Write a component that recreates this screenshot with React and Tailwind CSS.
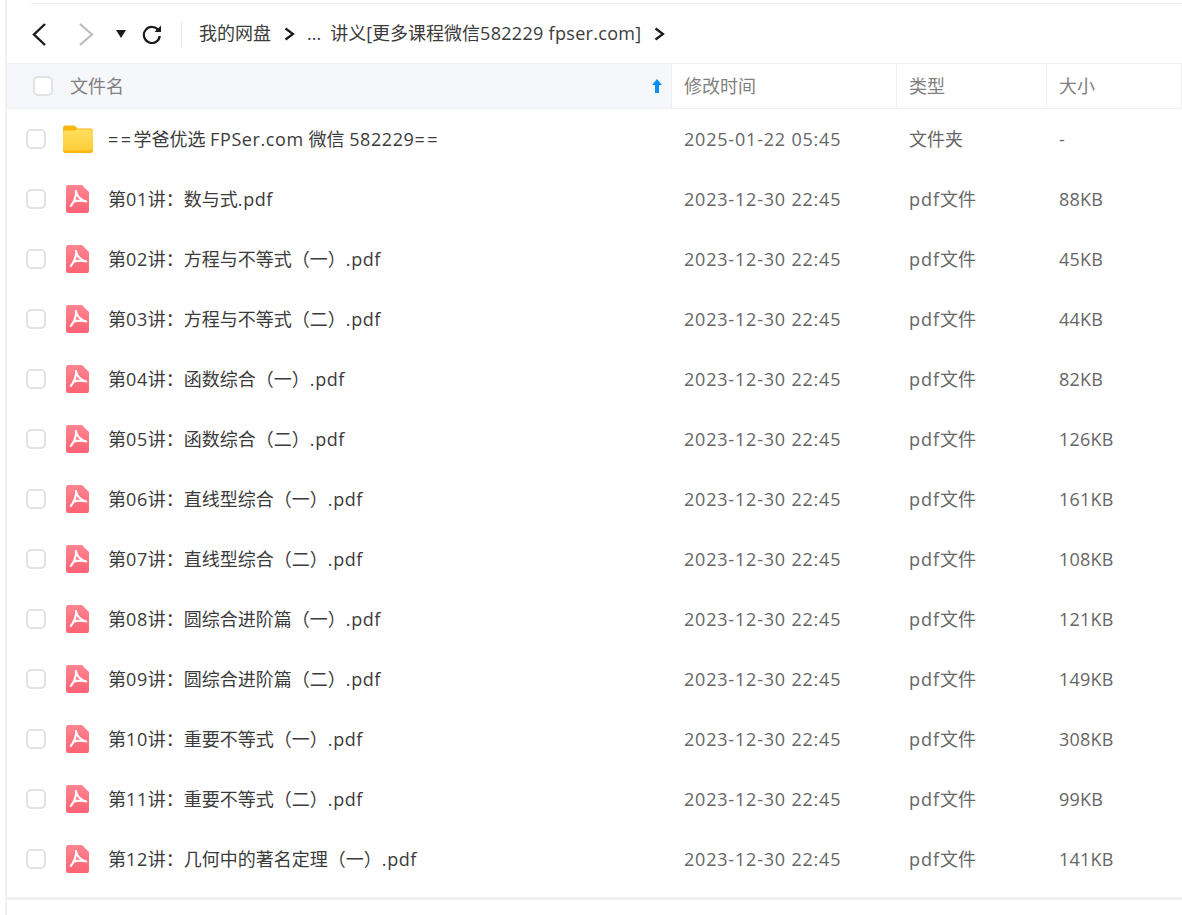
import React from "react";

const files = [
    {name: "第01讲：数与式.pdf", size: "88KB"},
    {name: "第02讲：方程与不等式（一）.pdf", size: "45KB"},
    {name: "第03讲：方程与不等式（二）.pdf", size: "44KB"},
    {name: "第04讲：函数综合（一）.pdf", size: "82KB"},
    {name: "第05讲：函数综合（二）.pdf", size: "126KB"},
    {name: "第06讲：直线型综合（一）.pdf", size: "161KB"},
    {name: "第07讲：直线型综合（二）.pdf", size: "108KB"},
    {name: "第08讲：圆综合进阶篇（一）.pdf", size: "121KB"},
    {name: "第09讲：圆综合进阶篇（二）.pdf", size: "149KB"},
    {name: "第10讲：重要不等式（一）.pdf", size: "308KB"},
    {name: "第11讲：重要不等式（二）.pdf", size: "99KB"},
    {name: "第12讲：几何中的著名定理（一）.pdf", size: "141KB"},
];

function Checkbox() {
    return <div className="w-[20px] h-[20px] rounded-[5px] border-2 border-[#e2e2e2] bg-white shrink-0"/>;
}

function FolderIcon() {
    return (
        <svg width="30" height="28" viewBox="0 0 30 28" className="shrink-0">
            <defs>
                <linearGradient id="folderbg" x1="0" y1="0" x2="0" y2="1">
                    <stop offset="0" stopColor="#ffdf5e"/>
                    <stop offset="1" stopColor="#fdcb34"/>
                </linearGradient>
            </defs>
            <path d="M0 3a2.500 2.500 0 0 1 2.500-2.500h8c1 0 1.600.4 2.300 1.200L14.500 3.500H27a3 3 0 0 1 3 3V12H0z" fill="#fbb612"/>
            <path d="M0 7.500a2 2 0 0 1 2-2h9.500c1 0 1.500-.3 2.200-1h13.300a3 3 0 0 1 3 3V25a3 3 0 0 1-3 3H3a3 3 0 0 1-3-3z" fill="url(#folderbg)"/>
            <path d="M0 25.500h30V25a3 3 0 0 1-3 3H3a3 3 0 0 1-3-3z" fill="#fbb612"/>
        </svg>
    );
}

function PdfIcon() {
    return (
        <svg width="23" height="28" viewBox="0 0 23 28" className="mr-[1px] shrink-0">
            <defs>
                <linearGradient id="pdfbg" x1="0" y1="0" x2="0" y2="1">
                    <stop offset="0" stopColor="#ff8590"/>
                    <stop offset="1" stopColor="#fe6273"/>
                </linearGradient>
            </defs>
            <path d="M2.500 0H16L23 7V25.500a2.500 2.500 0 0 1-2.500 2.500H2.500A2.500 2.500 0 0 1 0 25.500V2.500A2.500 2.500 0 0 1 2.500 0z" fill="url(#pdfbg)"/>
            <path d="M10 6c.6 4-1.500 10.500-5.200 15M10 6c.4 4 4 9 10.300 10.500M7.500 16.500c4-1 8.500-1.200 12.800 0" fill="none" stroke="#fff" strokeWidth="2.100" strokeLinecap="round"/>
        </svg>
    );
}

function Crumb() {
    return (
        <svg width="11" height="14" viewBox="0 0 11 14" className="shrink-0">
            <path d="M1.500 1.500L9 7L1.500 12.500" fill="none" stroke="#1a1a1a" strokeWidth="2.200"/>
        </svg>
    );
}

// latin runs sit a little wider than the font gives, cjk stays as is
function FileName({name}) {
    return name.split(/([0-9.a-z]+)/).map((part, i) => (
        i % 2 === 1 ? <span key={i} className="tracking-[0.6px]">{part}</span> : part
    ));
}

function Row({icon, name, time, type, size}) {
    return (
        <div className="flex items-center h-[60px] text-[18px]">
            <div className="w-[664px] flex items-center pl-[19px] shrink-0">
                <Checkbox/>
                <div className="ml-[17px] w-[30px] flex justify-center">
                    {icon === "folder" ? <FolderIcon/> : <PdfIcon/>}
                </div>
                <span className="ml-[15px] text-[#3b3b3b] whitespace-nowrap">{name}</span>
            </div>
            <div className="w-[225px] pl-[13px] text-[#666] tracking-[0.8px] whitespace-nowrap shrink-0">{time}</div>
            <div className="w-[150px] pl-[13px] text-[#666] whitespace-nowrap shrink-0">{type}</div>
            <div className="pl-[13px] text-[#666] tracking-[0.2px] whitespace-nowrap">{size}</div>
        </div>
    );
}

export default function App() {
    return (
        <div className="w-[1182px] h-[915px] overflow-hidden bg-white pl-[5px] font-['Open_Sans','Noto_Sans_CJK_SC',sans-serif]">
            <div className="h-full border-l-2 border-[#f0f0f0]">
                <div className="h-[3px]"/>
                <div className="ml-[24px] h-px bg-[#ececec]"/>
                {/* toolbar */}
                <div className="h-[59px] flex items-center">
                    <svg width="16" height="24" viewBox="0 0 16 24" className="ml-[24px] shrink-0">
                        <path d="M14 2L3 12.500L14 23" fill="none" stroke="#1a1a1a" strokeWidth="2.400"/>
                    </svg>
                    <svg width="16" height="24" viewBox="0 0 16 24" className="ml-[31px] shrink-0">
                        <path d="M2 2L14 12.500L2 23" fill="none" stroke="#bcbcbc" strokeWidth="2.200"/>
                    </svg>
                    <svg width="10" height="8" viewBox="0 0 10 8" className="ml-[22px] shrink-0">
                        <path d="M0 0H10L5 8z" fill="#1a1a1a"/>
                    </svg>
                    <svg width="20" height="20" viewBox="0 0 20 20" className="ml-[16px] shrink-0">
                        <path d="M16.500 6.500A8 8 0 1 0 17.800 12" fill="none" stroke="#1a1a1a" strokeWidth="2.200"/>
                        <path d="M12.500 8H19V1.500z" fill="#1a1a1a"/>
                    </svg>
                    <div className="ml-[19px] w-px h-[26px] bg-[#e8e8e8] shrink-0"/>
                    <div className="ml-[17px] flex items-center text-[18px] text-[#3b3b3b] whitespace-nowrap">
                        <span>我的网盘</span>
                        <span className="ml-[13px]"><Crumb/></span>
                        <span className="ml-[12px]">...</span>
                        <span className="ml-[9px]">讲义[更多课程微信<span className="tracking-[0.3px]">582229 fpser.com]</span></span>
                        <span className="ml-[13px]"><Crumb/></span>
                    </div>
                </div>
                {/* table head */}
                <div className="flex h-[46px] border-y border-[#f0f0f0] text-[18px] text-[#808080]">
                    <div className="w-[664px] flex items-center bg-[#f5f7fa] pl-[26px] pr-[9px] shrink-0">
                        <Checkbox/>
                        <span className="ml-[17px]">文件名</span>
                        <svg width="10" height="14" viewBox="0 0 10 14" className="ml-auto shrink-0">
                            <path d="M5 0L10 6H7V14H3V6H0z" fill="#0a90f5"/>
                        </svg>
                    </div>
                    <div className="w-[225px] flex items-center pl-[12px] border-l border-[#f0f0f0] shrink-0">修改时间</div>
                    <div className="w-[150px] flex items-center pl-[12px] border-l border-[#f0f0f0] shrink-0">类型</div>
                    <div className="w-[136px] flex items-center pl-[12px] border-x border-[#f0f0f0] shrink-0">大小</div>
                </div>
                {/* rows */}
                <Row
                    icon="folder"
                    name={<><span className="tracking-[2.4px]">==</span>学爸优选 <span className="tracking-[0.6px]">FPSer.com</span> 微信 <span className="tracking-[0.6px]">582229</span><span className="tracking-[2.4px]">==</span></>}
                    time="2025-01-22 05:45"
                    type="文件夹"
                    size="-"
                />
                {files.map((f) => (
                    <Row
                        key={f.name}
                        icon="pdf"
                        name={<FileName name={f.name}/>}
                        time="2023-12-30 22:45"
                        type={<><span className="tracking-[1px]">pdf</span>文件</>}
                        size={f.size}
                    />
                ))}
                <div className="mt-[8px] h-[3px] bg-[#f0f0f0]"/>
            </div>
        </div>
    );
}
